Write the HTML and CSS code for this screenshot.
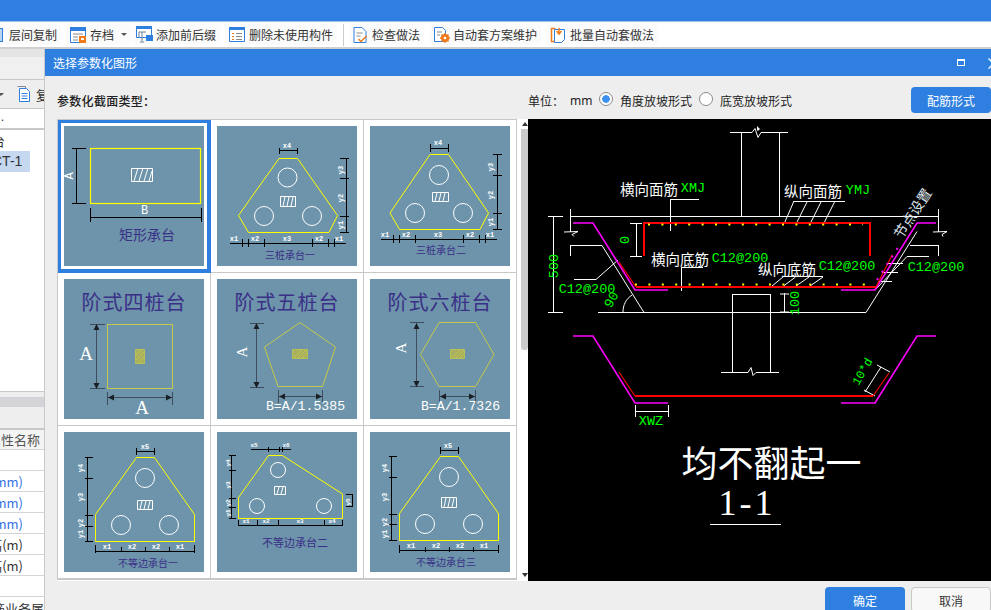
FILE: index.html
```html
<!DOCTYPE html>
<html lang="zh">
<head>
<meta charset="utf-8">
<title>选择参数化图形</title>
<link rel="stylesheet" href="styles.css">
</head>
<body>
<div class="page">
  <div class="topbar"></div>
  <div class="toolbar">
    <div class="tool tool-first">
      <svg class="ico" viewBox="0 0 16 16"><rect x="1.5" y="1.5" width="13" height="13" fill="#b9d3f3" stroke="#2e7fe0"/></svg>
      <span>层间复制</span>
    </div>
    <div class="tool">
      <svg class="ico" viewBox="0 0 16 16"><path d="M.5.5h15v15H.5z" fill="#fff" stroke="#2e7fe0"/><path d="M0 0h16v4H0z" fill="#2e7fe0"/><path d="M3 7h10M3 10h5M3 13h5" stroke="#8a8a8a"/><path d="M9 9h7v7H9z" fill="#f07a1a"/><path d="M11 11h3v2h-3z" fill="#fff"/></svg>
      <span>存档</span>
      <i class="caret"></i>
    </div>
    <div class="tool tool-tight">
      <svg class="ico ico-wide" viewBox="0 0 17 17"><path d="M.5.5h15v11H.5z" fill="#fff" stroke="#2e7fe0"/><path d="M0 0h16v3H0z" fill="#2e7fe0"/><path d="M3 6h7M3 6v5M6 6v9M4 16h4" stroke="#6b7f96" fill="none"/><path d="M10 9h7v6h-7z" fill="#2e7fe0"/></svg>
      <span>添加前后缀</span>
    </div>
    <div class="tool">
      <svg class="ico" viewBox="0 0 16 16"><path d="M.5.5h15v14H.5z" fill="#fff" stroke="#2e7fe0"/><path d="M0 0h16v3H0z" fill="#2e7fe0"/><path d="M3 6h2v1H3zM3 9h2v1H3zM3 12h2v1H3z" fill="#f07a1a"/><path d="M7 6.500h6M7 9.500h6M7 12.500h6" stroke="#8a8a8a"/></svg>
      <span>删除未使用构件</span>
    </div>
    <div class="sep"></div>
    <div class="tool tool-check">
      <svg class="ico ico-doc" viewBox="0 0 14 16"><path d="M.5.5h8l4 4v11H.5z" fill="#fff" stroke="#2e7fe0"/><path d="M3 6h6M3 9h4" stroke="#8a8a8a"/><path d="M5 12l2.500 2.500L13 9" fill="none" stroke="#f07a1a" stroke-width="1.500"/></svg>
      <span>检查做法</span>
    </div>
    <div class="tool tool-doc">
      <svg class="ico" viewBox="0 0 16 16"><path d="M.5.5h8l3 3v11H.5z" fill="#fff" stroke="#2e7fe0"/><path d="M3 5h5M3 8h3" stroke="#8a8a8a"/><circle cx="11" cy="11" r="3" fill="none" stroke="#f07a1a" stroke-width="2.200"/><path d="M11 6v10M6 11h10M7.500 7.500l7 7M14.500 7.500l-7 7" stroke="#f07a1a" stroke-width="1.300"/><circle cx="11" cy="11" r="1.300" fill="#fff"/></svg>
      <span>自动套方案维护</span>
    </div>
    <div class="tool">
      <svg class="ico" viewBox="0 0 16 16"><path d="M5.500 1.500H1.500v13h4" fill="none" stroke="#f07a1a" stroke-width="1.500"/><path d="M4.500 2.500h10v10l-3 3h-7z" fill="#fff" stroke="#2e7fe0"/><path d="M9 1v5M6.500 4L9 7l2.500-3" fill="none" stroke="#f07a1a" stroke-width="1.500"/></svg>
      <span>批量自动套做法</span>
    </div>
  </div>
  <div class="content">
    <aside class="side">
      <div class="side-head"></div>
      <div class="side-tab"></div>
      <div class="side-tools">
        <i class="caret caret-side"></i>
        <svg class="side-copy" viewBox="0 0 13 16"><path d="M.5.5h8v2" fill="none" stroke="#7f8a96"/><path d="M2.500 2.500h7l3 3v10h-10z" fill="#fff" stroke="#2e7fe0"/><path d="M4.500 7.500h6M4.500 10h6M4.500 12.500h6" stroke="#2e7fe0"/></svg>
        <span class="side-copy-text">复</span>
      </div>
      <div class="side-search">.</div>
      <div class="tree">
        <div class="tree-item">台</div>
        <div class="tree-item tree-sel"><span>CT-1</span></div>
      </div>
      <div class="side-gap"></div>
      <div class="side-bar"></div>
      <div class="side-gap2"></div>
      <div class="prop prop-head"><span>属性名称</span></div>
      <div class="prop"></div>
      <div class="prop prop-blue"><span>mm)</span></div>
      <div class="prop prop-blue"><span>mm)</span></div>
      <div class="prop prop-blue"><span>mm)</span></div>
      <div class="prop"><span>高(m)</span></div>
      <div class="prop"><span>高(m)</span></div>
      <div class="prop"></div>
      <div class="prop"><span class="prop-last">筋业务属</span></div>
    </aside>
    <section class="dialog">
      <header class="dlg-title">
        <span>选择参数化图形</span>
        <i class="dlg-max"></i>
        <span class="dlg-close">×</span>
      </header>
      <div class="dlg-options">
        <div class="opt-left">参数化截面类型：</div>
        <div class="opt-right">
          <span class="unit">单位：</span>
          <span class="unit-val">mm</span>
          <i class="radio radio-on"></i>
          <span class="radio-label">角度放坡形式</span>
          <i class="radio"></i>
          <span class="radio-label">底宽放坡形式</span>
          <button class="btn btn-primary btn-push">配筋形式</button>
        </div>
      </div>
      <div class="dlg-main">
        <div class="gallery">
          <div class="grid">
            <div class="cell cell-sel">
              <svg class="tile" viewBox="0 0 140 140">
                <rect class="yl2" x="26.500" y="22.500" width="110" height="55"/>
                <path class="dim" d="M12.500 22v55M8 22.500h14M8 77.500h14M26.500 82v14M137.500 82v14M26.500 91.500h111"/>
                <path class="wh" d="M67.500 42.500h21v13h-21zM70 55l4-13M75 55l4-13M80 55l4-13M85 55l3-10"/>
                <text class="ltr" transform="translate(6 50) rotate(-90)">A</text>
                <text class="ltr" x="80.500" y="85">B</text>
                <text class="cap cap14" x="83" y="108">矩形承台</text>
              </svg>
            </div>
            <div class="cell">
              <svg class="tile" viewBox="0 0 140 140">
                <path class="yl" d="M62 32.500h18.500l40 57-8.500 17H31.500l-10-17z"/>
                <g class="wh"><circle cx="70.500" cy="51.500" r="9.500"/><circle cx="47" cy="90" r="9.500"/><circle cx="95" cy="90" r="9.500"/><path d="M63.500 70.500h15v10h-15zM66 80l2-9M70 80l2-9M74 80l2-9"/></g>
                <path class="dim" d="M62.500 22v6M80.500 22v6M62.500 24.500h18M129.500 32v74M123 32.500h9M123 52.500h9M123 90.500h9M123 106.500h9M13 117.500h116M25.500 113v8M31.500 113v8M47.500 113v8M95.500 113v8M111.500 113v8M117.500 113v8"/>
                <g class="lb"><text x="70" y="20">x4</text><text x="17" y="113">x1</text><text x="38" y="113">x2</text><text x="70" y="113">x3</text><text x="102" y="113">x2</text><text x="122" y="113">x1</text>
                <text transform="translate(124 44) rotate(-90)">y3</text><text transform="translate(124 72) rotate(-90)">y2</text><text transform="translate(124 99) rotate(-90)">y1</text></g>
                <text class="cap cap10" x="73" y="128">三桩承台一</text>
              </svg>
            </div>
            <div class="cell">
              <svg class="tile" viewBox="0 0 140 140">
                <path class="yl" d="M60 28.500h18.500l40 58.500-8.500 16.500H29.500L20 87z"/>
                <g class="wh"><circle cx="69" cy="49" r="9.500"/><circle cx="45" cy="87" r="9.500"/><circle cx="93" cy="87" r="9.500"/><path d="M62.500 66.500h16v9h-16zM65 75l2-8M69 75l2-8M73 75l2-8"/></g>
                <path class="dim" d="M60.500 18v8M78.500 18v8M60.500 22.500h18M127.500 28v75M123 28.500h9M123 49.500h9M123 87.500h9M123 103.500h9M11 113.500h116M23.500 109v8M29.500 109v8M45.500 109v8M93.500 109v8M109.500 109v8M115.500 109v8"/>
                <g class="lb"><text x="68" y="17">x4</text><text x="15" y="109">x1</text><text x="36" y="109">x2</text><text x="68" y="109">x3</text><text x="100" y="109">x2</text><text x="120" y="109">x1</text>
                <text transform="translate(121 41) rotate(-90)">y3</text><text transform="translate(121 69) rotate(-90)">y2</text><text transform="translate(121 96) rotate(-90)">y1</text></g>
                <text class="cap cap10" x="71" y="123">三桩承台二</text>
              </svg>
            </div>
            <div class="cell">
              <svg class="tile" viewBox="0 0 140 140">
                <text class="cap cap20" x="70" y="22">阶式四桩台</text>
                <rect class="ol" x="43.500" y="45.500" width="65" height="64"/>
                <path class="ol ht" d="M71.500 70.500h9v14h-9zM72 76l6-6M72 81l8-8M74 84l6-6"/>
                <path class="gd" d="M32.500 46v63M26 45.500h15M26 109.500h15M43.500 113v13M108.500 113v13M44 118.500h64"/>
                <path class="ah" d="M32.500 45l-3 6h6zM32.500 110l-3-6h6zM44 118.500l6-3v6zM108 118.500l-6-3v6z"/>
                <text class="ltr ltr18" x="22" y="74">A</text>
                <text class="ltr ltr18" x="78" y="128">A</text>
              </svg>
            </div>
            <div class="cell">
              <svg class="tile" viewBox="0 0 140 140">
                <text class="cap cap20" x="70" y="22">阶式五桩台</text>
                <path class="ol" d="M83 43.500l35.500 24.500-13 39.500H61L47.500 68z"/>
                <path class="ol ht" d="M75.500 70.500h15v9h-15zM77 79l8-8M81 79l8-8M85 79l5-5"/>
                <path class="gd" d="M39.500 44v64M33 44.500h14M33 108.500h14M61.500 111v13M105.500 111v13M62 117.500h43"/>
                <path class="ah" d="M39.500 44l-3 6h6zM39.500 109l-3-6h6zM62 117.500l6-3v6zM105 117.500l-6-3v6z"/>
                <text class="ltr ltr14" transform="translate(25 73) rotate(-90)">A</text>
                <text class="mono13" x="88.500" y="127.500">B=A/1.5385</text>
              </svg>
            </div>
            <div class="cell">
              <svg class="tile" viewBox="0 0 140 140">
                <text class="cap cap20" x="70" y="22">阶式六桩台</text>
                <path class="ol" d="M69 43.500h36.500L124 75.500l-18.500 32H69L50.500 75.500z"/>
                <path class="ol ht" d="M80.500 70.500h14v9h-14zM82 79l8-8M86 79l8-8M90 79l4-4"/>
                <path class="gd" d="M46.500 44v63M40 43.500h14M40 107.500h14M69.500 111v13M105.500 111v13M70 117.500h35"/>
                <path class="ah" d="M46.500 44l-3 6h6zM46.500 108l-3-6h6zM70 117.500l6-3v6zM105 117.500l-6-3v6z"/>
                <text class="ltr ltr14" transform="translate(31 69) rotate(-90)">A</text>
                <text class="mono13" x="90.500" y="127.500">B=A/1.7326</text>
              </svg>
            </div>
            <div class="cell">
              <svg class="tile" viewBox="0 0 140 140">
                <path class="yl" d="M72.500 25.500h18l40 57v27h-99v-27z"/>
                <g class="wh"><circle cx="81" cy="46" r="9.500"/><circle cx="57" cy="93" r="9.500"/><circle cx="105" cy="93" r="9.500"/><path d="M73.500 68.500h15v9h-15zM76 77l2-8M80 77l2-8M84 77l2-8"/></g>
                <path class="dim" d="M72.500 16v7M90.500 16v7M72.500 19.500h18M23.500 25v84M21 25.500h8M21 46.500h8M21 83.500h8M21 94.500h8M21 109.500h8M31.500 119.500h99M31.500 113v8M57.500 115v5M81.500 115v5M105.500 115v5M130.500 113v8"/>
                <g class="lb"><text x="81" y="15">x5</text><text x="43" y="115">x1</text><text x="68" y="115">x2</text><text x="92" y="115">x2</text><text x="116" y="115">x1</text>
                <text transform="translate(17 36) rotate(-90)">y4</text><text transform="translate(17 65) rotate(-90)">y3</text><text transform="translate(17 91) rotate(-90)">y2</text><text transform="translate(17 102) rotate(-90)">y1</text></g>
                <text class="cap cap10" x="84" y="130">不等边承台一</text>
              </svg>
            </div>
            <div class="cell">
              <svg class="tile" viewBox="0 0 140 140">
                <path class="yl" d="M51.500 23.500h14l60 38.500v24.500h-104V65.500z"/>
                <g class="wh"><circle cx="61" cy="38" r="7.500"/><circle cx="40" cy="74" r="7.500"/><circle cx="107" cy="74" r="7.500"/><path d="M57.500 54.500h11v8h-11zM60 62l2-7M64 62l2-7"/></g>
                <path class="dim" d="M34 17.500h40M51.500 15v5M62.500 15v5M65.500 15v5M14.500 23v63M12 23.500h7M12 38.500h7M12 66.500h7M12 75.500h7M12 86.500h7M135.500 62v12M129 62.500h7M129 74.500h7M21 93.500h104M21.500 88v6M40.500 88v6M61.500 88v6M107.500 88v6M125.500 88v6"/>
                <g class="lb lb6"><text x="37" y="13.500">x5</text><text x="69" y="13.500">x6</text><text x="29" y="89">x1</text><text x="49" y="89">x2</text><text x="83" y="89">x3</text><text x="115" y="89">x4</text>
                <text transform="translate(11 31) rotate(-90)">y4</text><text transform="translate(11 53) rotate(-90)">y3</text><text transform="translate(11 71) rotate(-90)">y2</text><text transform="translate(11 81) rotate(-90)">y1</text><text transform="translate(131 70) rotate(-90)">y5</text></g>
                <text class="cap cap11" x="78" y="110">不等边承台二</text>
              </svg>
            </div>
            <div class="cell">
              <svg class="tile" viewBox="0 0 140 140">
                <path class="yl" d="M70.500 24.500h18l40 57v27h-99v-27z"/>
                <g class="wh"><circle cx="79" cy="45" r="9.500"/><circle cx="55" cy="92" r="9.500"/><circle cx="103" cy="92" r="9.500"/><path d="M71.500 65.500h15v10h-15zM74 75l2-9M78 75l2-9M82 75l2-9"/></g>
                <path class="dim" d="M70.500 15v7M88.500 15v7M70.500 18.500h18M21.500 24v84M19 24.500h8M19 45.500h8M19 82.500h8M19 92.500h8M19 108.500h8M29.500 118.500h99M29.500 113v8M55.500 115v5M79.500 115v5M103.500 115v5M128.500 113v8"/>
                <g class="lb"><text x="78" y="14">x5</text><text x="41" y="114">x1</text><text x="66" y="114">x2</text><text x="90" y="114">x2</text><text x="114" y="114">x1</text>
                <text transform="translate(15 36) rotate(-90)">y4</text><text transform="translate(15 65) rotate(-90)">y3</text><text transform="translate(15 90) rotate(-90)">y2</text><text transform="translate(15 102) rotate(-90)">y1</text></g>
                <text class="cap cap10" x="76" y="129">不等边承台三</text>
              </svg>
            </div>
          </div>
          <div class="scroll">
            <i class="arrow-up"></i>
            <div class="thumb"></div>
            <i class="arrow-down"></i>
          </div>
        </div>
        <div class="drawing">
          <svg class="cad" viewBox="0 0 463 462">
            <g class="w">
              <path d="M202 13.500h22l3-4 3 9 3-5h27M213.500 13v85M251.500 13v85"/>
              <path d="M42 97.500h369M42.500 90v23M42.500 126v11M410.500 90v23M410.500 126v11"/>
              <path d="M36 113l14-.5-6 3 2 2M405 113l14-.5-5 3 1 2"/>
              <path d="M42 126.500h32l42 67M70 193.500h268l51-81M382 126.500h29"/>
              <path d="M204.500 175v79M242.500 175v79M204 175.500h39M193 253.500h27l3-5 2 8 3-3h23"/>
              <path d="M25.500 98v95M20 97.500h15M20 193.500h15M108.500 104v33M102 104.500h12M102 137.500h12"/>
              <path d="M142.500 80v32M142 80.500h29M266 82.500h51M266 82l-10 23M279.500 82l-11 22M293.500 82l-11 22M307 82l-11 22"/>
              <path d="M153.500 148v24M153 148.500h22M255 157.500h40M255 158l-11 9M267.500 158l-12 9M281 158l-13 9M295 158l-13 9"/>
              <path d="M46 160.500h22L90 141M401 137.500h-22L348 170M375 144.500h-15M370 153.500h-16M364 162.500h-14"/>
              <path d="M95 193c0-7 3-13 9-17M256.500 174v19M252 175h9M252 193h9"/>
              <path d="M107.500 286v12M140.500 286v12M107 292.500h34M353 248l-16 25M349 246l13 7M336 271l11 6"/>
              <path d="M182 405.500h71"/>
            </g>
            <path class="mg" d="M45 104h20l42 67h33M313 171h34l42-67h19M45 217h20l42 67h33M313 284h34l42-67h19"/>
            <path class="rd" d="M116 137v-33h226v33M108 168h240M107 277h238"/>
            <path class="rd-thin" d="M91 143l17 25M348 168l16-32M91 253l16 24M345 277l16-23"/>
            <path class="dots" d="M120 105.500h215M107 165.500h241"/>
            <path class="pdots" d="M349 161l22-34"/>
            <g class="gr">
              <text transform="translate(26 147) rotate(-90)">500</text>
              <text transform="translate(97 121) rotate(-90)">0</text>
              <text x="59" y="170">C12@200</text>
              <text transform="translate(84 181) rotate(-60)">90</text>
              <text transform="translate(267 184) rotate(-90)">100</text>
              <text x="165" y="69">XMJ</text>
              <text x="330" y="71">YMJ</text>
              <text x="212" y="139">C12@200</text>
              <text x="319" y="147">C12@200</text>
              <text x="408" y="148">C12@200</text>
              <text x="123" y="302">XWZ</text>
              <text class="gr12" transform="translate(335 253) rotate(-60)">10*d</text>
            </g>
            <g class="wt">
              <text x="121" y="69">横向面筋</text>
              <text x="285" y="71">纵向面筋</text>
              <text x="152" y="139">横向底筋</text>
              <text x="259" y="149">纵向底筋</text>
              <text class="wt-rot" transform="translate(384 94) rotate(-57)">节点设置</text>
            </g>
            <text class="big" x="243.500" y="342">均不翻起一</text>
            <text class="num" x="219" y="384">1-1</text>
            <path class="cursor" d="M229 7v5l1-1 1 1v-1l1-1z"/>
          </svg>
        </div>
      </div>
      <footer class="dlg-foot">
        <button class="btn btn-primary">确定</button>
        <button class="btn btn-plain">取消</button>
      </footer>
    </section>
  </div>
</div>
</body>
</html>
```
FILE: styles.css
```css
* { box-sizing: border-box; margin: 0; padding: 0; }
html, body { width: 991px; height: 610px; overflow: hidden; }
body {
  font-family: "Noto Sans CJK SC", "Liberation Sans", sans-serif;
  font-size: 12px;
  color: #333;
  background: #fff;
}
.page { width: 991px; height: 610px; display: flex; flex-direction: column; overflow: hidden; }
.topbar { background: #2e7fe0; border-bottom: 1px solid #9cc2ee; flex: none; height: 22px; }

.toolbar {
  height: 25px;
  flex: none;
  display: flex;
  align-items: center;
  gap: 5px;
  background: #fff;
  overflow: hidden;
  margin-left: -16px;
}
.tool {
  display: flex;
  align-items: center;
  height: 21px;
  gap: 4px;
  padding: 0 4px;
  background: #fbfbfb;
  border-radius: 4px;
  white-space: nowrap;
  flex: none;
}
.tool-first { gap: 5px; }
.tool-tight { gap: 3px; margin-left: -4px; }
.tool-check { margin-left: -1px; margin-right: 1px; }
.tool-doc { gap: 3px; }
.ico { width: 16px; height: 16px; flex: none; }
.ico-wide { width: 17px; height: 17px; }
.ico-doc { width: 15px; height: 16px; }
.caret { width: 0; height: 0; border: 3px solid transparent; border-top: 3px solid #555; border-bottom: 0; margin-left: 3px; }
.sep { width: 1px; height: 22px; background: #ccc; margin: 0 1px; flex: none; }

.content { flex: 1; display: flex; min-height: 0; border-top: 2px solid #cfcfcf; }

.side { width: 45px; flex: none; display: flex; flex-direction: column; overflow: hidden; background: #fff; border-right: 1px solid #c8c8c8; }
.side-head { height: 8px; background: #e4e4e4; flex: none; }
.side-tab { height: 23px; background: #f0f0f0; border-bottom: 1px solid #c8c8c8; flex: none; }
.side-tools { height: 29px; flex: none; background: #eee; border-bottom: 1px solid #c8c8c8; display: flex; align-items: center; overflow: hidden; }
.caret-side { margin-left: -2px; }
.side-copy { width: 13px; height: 16px; margin-left: 13px; flex: none; }
.side-copy-text { margin-left: 6px; font-size: 13px; flex: none; }
.side-search { flex: none; line-height: 15px; font-size: 11px; padding-left: 1px; border-bottom: 2px solid #c8c8c8; height: 21px; }
.tree { height: 262px; flex: none; overflow: hidden; border-bottom: 1px solid #c8c8c8; }
.tree-item { height: 21px; line-height: 21px; font-size: 13px; white-space: nowrap; margin-left: -8px; }
.tree-sel { width: 38px; background: #c5d8f0; }
.tree-sel span { display: block; font-family: "Liberation Sans", sans-serif; font-size: 14px; color: #333; }
.side-gap { height: 5px; flex: none; background: #eee; }
.side-bar { height: 10px; flex: none; background: #d4d4d8; }
.side-gap2 { flex: none; background: #eee; border-bottom: 2px solid #c8c8c8; height: 23px; }
.prop { height: 21px; flex: none; border-bottom: 1px solid #d5d5d5; display: flex; justify-content: flex-end; align-items: center; padding-right: 21px; white-space: nowrap; font-size: 13px; color: #333; overflow: hidden; }
.prop span { flex: none; }
.prop-head { background: #f4f4f4; padding-right: 4px; height: 20px; color: #555; }
.prop-blue { color: #2f6fe8; }
.prop-last { font-size: 13px; margin-right: -21px; transform: translateY(1px); }

.dialog { flex: 1; display: flex; flex-direction: column; background: #eee; min-width: 0; }
.dlg-title { height: 27px; flex: none; background: #2e7fe0; color: #fff; display: flex; align-items: center; padding-left: 8px; }
.dlg-max { width: 8px; height: 7px; border: 1px solid #fff; border-top-width: 2px; margin-left: auto; margin-right: 20px; }
.dlg-close { font-size: 17px; line-height: 1; width: 6px; overflow: visible; white-space: nowrap; }
.dlg-options { height: 43px; flex: none; display: flex; align-items: center; padding: 5px 0 0 12px; color: #222; }
.opt-left { width: 471px; flex: none; font-weight: 500; letter-spacing: .3px; }
.opt-right { flex: 1; display: flex; align-items: center; }
.unit { width: 42px; }
.unit-val { font-family: "Noto Sans", sans-serif; font-size: 12px; width: 29px; }
.radio { width: 14px; height: 14px; border: 1px solid #8a8a8a; border-radius: 50%; background: #fff; flex: none; margin-right: 7px; display: flex; transform: translateY(-1px); }
.radio-on { background: radial-gradient(circle, #3d8ff0 0 3.500px, #fff 4px); }
.radio-label { width: 79px; flex: none; }
.btn { font: inherit; border-radius: 4px; border: 1px solid transparent; width: 80px; height: 26px; flex: none; }
.btn-primary { background: #2e7fe0; color: #fff; }
.btn-plain { background: #f8f8f8; border-color: #c8c8c8; color: #333; }
.btn-push { margin-left: auto; }

.dlg-main { height: 462px; flex: none; display: flex; padding-left: 12px; }
.gallery { width: 471px; flex: none; display: flex; background: #fff; }
.grid {
  width: 460px;
  height: 461px;
  flex: none;
  display: grid;
  grid-template-columns: repeat(3, 153px);
  grid-template-rows: repeat(3, 153px);
  background: #fff;
  border-top: 1px solid #c8c8c8;
  border-left: 1px solid #c8c8c8;
  border-bottom: 1px solid #c8c8c8;
}
.cell { padding: 6px; border-right: 1px solid #c8c8c8; border-bottom: 1px solid #c8c8c8; background: #fff; }
.cell-sel { box-shadow: inset 0 0 0 3px #2e7fe0; border-color: #2e7fe0; }
.tile { display: block; width: 140px; height: 140px; background: #6d94aa; }

.scroll { flex: 1; display: flex; flex-direction: column; align-items: flex-end; }
.thumb { width: 7px; height: 221px; background: #ccc; border-radius: 0 0 3px 3px; margin-top: 3px; }
.arrow-up, .arrow-down { width: 0; height: 0; border: 3.500px solid transparent; flex: none; }
.arrow-up { border-bottom: 4px solid #333; border-top: 0; margin-top: 3px; }
.arrow-down { border-top: 4px solid #333; border-bottom: 0; margin-top: 223px; }

.drawing { width: 463px; flex: none; background: #000; }
.cad { display: block; width: 463px; height: 462px; }

.dlg-foot { flex: 1; display: flex; justify-content: flex-end; gap: 6px; padding: 6px 0 0 0; min-height: 0; }

/* drawing strokes */
.dim { fill: none; stroke: #000; stroke-width: 1; shape-rendering: crispEdges; }
.yl { fill: none; stroke: #ff0; stroke-width: 1; }
.yl2 { fill: none; stroke: #ff0; stroke-width: 1.200; }
.wh { fill: none; stroke: #fff; stroke-width: 1; }
.ol { fill: none; stroke: #c6c948; stroke-width: 1; }
.ht { fill: #a9b060; stroke-width: .8; }
.gd { fill: none; stroke: #3f4d5a; stroke-width: 1; shape-rendering: crispEdges; }
.ah { fill: #1a1f26; stroke: none; }
text { text-anchor: middle; dominant-baseline: central; }
.lb { fill: #fff; stroke: none; }
.lb text { font: bold 7px "Liberation Mono", monospace; }
.lb6 text { font-size: 6px; }
.ltr { font: 12px "Liberation Mono", monospace; fill: #fff; }
.ltr14 { font: 15px "Liberation Serif", serif; }
.ltr18 { font: 19px "Liberation Serif", serif; }
.mono13 { font: 13.200px "Liberation Mono", monospace; fill: #fff; }
.cap { fill: #3b3088; font-family: "Noto Sans CJK SC", sans-serif; }
.cap10 { font-size: 10px; }
.cap11 { font-size: 11px; }
.cap14 { font-size: 14px; }
.cap20 { font-size: 20px; letter-spacing: 1px; }

.w { fill: none; stroke: #fff; stroke-width: 1; }
.mg { fill: none; stroke: #f0f; stroke-width: 1.600; }
.rd { fill: none; stroke: #f00; stroke-width: 2; }
.rd-thin { fill: none; stroke: #f00; stroke-width: 1.100; }
.dots { fill: none; stroke: #ff0; stroke-width: 2; stroke-dasharray: 2 11.400; }
.pdots { fill: none; stroke: #f0f; stroke-width: 2; stroke-dasharray: 2 7; }
.gr text { fill: #0f0; font: 13.500px "Liberation Mono", monospace; }
.gr .gr12 { font-size: 12px; }
.wt text { fill: #fff; font: 14.500px "Noto Sans CJK SC", sans-serif; }
.wt .wt-rot { font-size: 14px; fill: #dfe6ee; }
.big { fill: #fff; font: 36px "Noto Sans CJK SC", sans-serif; }
.num { fill: #fff; font: 36px "Liberation Serif", serif; letter-spacing: 3px; }
.cursor { fill: #fff; }
```
